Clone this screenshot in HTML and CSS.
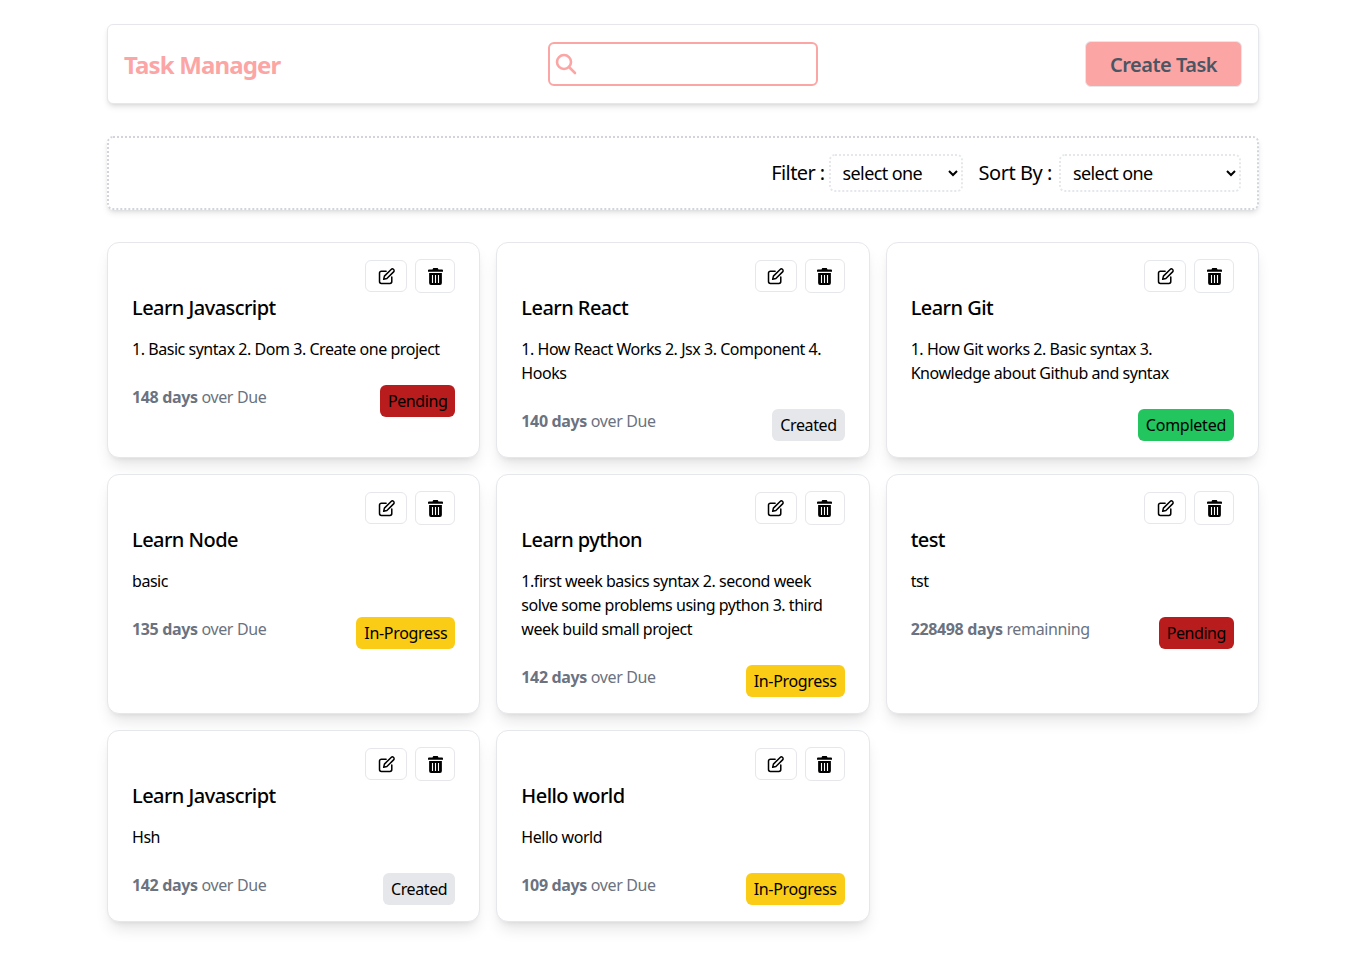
FILE: index.html
```html
<!DOCTYPE html>
<html lang="en">

<head>
    <meta charset="UTF-8">
    <title>Task Manager</title>

    <link rel="stylesheet" href="styles.css">
</head>

<body>
    <svg class="icon-defs" width="0" height="0" aria-hidden="true">
        <symbol id="icon-edit" viewBox="0 0 18 18">
            <path d="M8.6 3.4H3.6a2 2 0 0 0-2 2v9a2 2 0 0 0 2 2h9a2 2 0 0 0 2-2V9.6" fill="none" stroke="currentColor" stroke-width="1.6" stroke-linecap="round" stroke-linejoin="round" />
            <path d="M13.9 1.5a1.8 1.800 0 0 1 2.600 2.600L9.400 11.200l-3.400.8.8-3.400z" fill="none" stroke="currentColor" stroke-width="1.6" stroke-linejoin="round" />
        </symbol>
        <symbol id="icon-trash" viewBox="0 0 16 18">
            <path d="M5.6 0h4.8l.8 1.6H15a1 1 0 0 1 1 1V4H0V2.600a1 1 0 0 1 1-1h3.800z" fill="currentColor" />
            <path fill-rule="evenodd" d="M1.200 5.200h13.600V16a2 2 0 0 1-2 2H3.200a2 2 0 0 1-2-2zM4.200 7.400V15.800H5.400V7.400zM7.400 7.400V15.800H8.600V7.400zM10.600 7.400V15.800H11.800V7.400z" fill="currentColor" />
        </symbol>
    </svg>

    <div class="page">
        <header class="topbar">
            <h1 class="logo">Task Manager</h1>
            <div class="search">
                <svg class="search-icon" width="22" height="22" viewBox="0 0 22 22">
                    <circle cx="9" cy="9" r="7" fill="none" stroke="currentColor" stroke-width="2.6" />
                    <path d="M14 14l6 6" fill="none" stroke="currentColor" stroke-width="2.6" stroke-linecap="round" />
                </svg>
                <input class="search-input" type="text">
            </div>
            <button class="create-btn">Create Task</button>
        </header>

        <section class="filters">
            <label class="filter-label" for="filter">Filter :</label>
            <select class="filter-select filter-short" id="filter">
                <option>select one</option>
            </select>
            <label class="filter-label sort-label" for="sort">Sort By :</label>
            <select class="filter-select filter-long" id="sort">
                <option>select one</option>
            </select>
        </section>

        <main class="tasks">
            <article class="card">
                <div class="card-actions">
                    <button class="icon-btn edit-btn"><svg class="edit-icon"><use href="#icon-edit"></use></svg></button>
                    <button class="icon-btn trash-btn"><svg class="trash-icon"><use href="#icon-trash"></use></svg></button>
                </div>
                <h2 class="card-title">Learn Javascript</h2>
                <p class="card-desc">1. Basic syntax 2. Dom 3. Create one project</p>
                <div class="card-foot">
                    <p class="due"><b>148 days</b> over Due</p>
                    <span class="badge pending">Pending</span>
                </div>
            </article>

            <article class="card">
                <div class="card-actions">
                    <button class="icon-btn edit-btn"><svg class="edit-icon"><use href="#icon-edit"></use></svg></button>
                    <button class="icon-btn trash-btn"><svg class="trash-icon"><use href="#icon-trash"></use></svg></button>
                </div>
                <h2 class="card-title">Learn React</h2>
                <p class="card-desc">1. How React Works 2. Jsx 3. Component 4. Hooks</p>
                <div class="card-foot">
                    <p class="due"><b>140 days</b> over Due</p>
                    <span class="badge created">Created</span>
                </div>
            </article>

            <article class="card">
                <div class="card-actions">
                    <button class="icon-btn edit-btn"><svg class="edit-icon"><use href="#icon-edit"></use></svg></button>
                    <button class="icon-btn trash-btn"><svg class="trash-icon"><use href="#icon-trash"></use></svg></button>
                </div>
                <h2 class="card-title">Learn Git</h2>
                <p class="card-desc">1. How Git works 2. Basic syntax 3. Knowledge about Github and syntax</p>
                <div class="card-foot">
                    <p class="due"></p>
                    <span class="badge completed">Completed</span>
                </div>
            </article>

            <article class="card">
                <div class="card-actions">
                    <button class="icon-btn edit-btn"><svg class="edit-icon"><use href="#icon-edit"></use></svg></button>
                    <button class="icon-btn trash-btn"><svg class="trash-icon"><use href="#icon-trash"></use></svg></button>
                </div>
                <h2 class="card-title">Learn Node</h2>
                <p class="card-desc">basic</p>
                <div class="card-foot">
                    <p class="due"><b>135 days</b> over Due</p>
                    <span class="badge progress">In-Progress</span>
                </div>
            </article>

            <article class="card">
                <div class="card-actions">
                    <button class="icon-btn edit-btn"><svg class="edit-icon"><use href="#icon-edit"></use></svg></button>
                    <button class="icon-btn trash-btn"><svg class="trash-icon"><use href="#icon-trash"></use></svg></button>
                </div>
                <h2 class="card-title">Learn python</h2>
                <p class="card-desc">1.first week basics syntax 2. second week solve some problems using python 3. third week build small project</p>
                <div class="card-foot">
                    <p class="due"><b>142 days</b> over Due</p>
                    <span class="badge progress">In-Progress</span>
                </div>
            </article>

            <article class="card">
                <div class="card-actions">
                    <button class="icon-btn edit-btn"><svg class="edit-icon"><use href="#icon-edit"></use></svg></button>
                    <button class="icon-btn trash-btn"><svg class="trash-icon"><use href="#icon-trash"></use></svg></button>
                </div>
                <h2 class="card-title">test</h2>
                <p class="card-desc">tst</p>
                <div class="card-foot">
                    <p class="due"><b>228498 days</b> remainning</p>
                    <span class="badge pending">Pending</span>
                </div>
            </article>

            <article class="card">
                <div class="card-actions">
                    <button class="icon-btn edit-btn"><svg class="edit-icon"><use href="#icon-edit"></use></svg></button>
                    <button class="icon-btn trash-btn"><svg class="trash-icon"><use href="#icon-trash"></use></svg></button>
                </div>
                <h2 class="card-title">Learn Javascript</h2>
                <p class="card-desc">Hsh</p>
                <div class="card-foot">
                    <p class="due"><b>142 days</b> over Due</p>
                    <span class="badge created">Created</span>
                </div>
            </article>

            <article class="card">
                <div class="card-actions">
                    <button class="icon-btn edit-btn"><svg class="edit-icon"><use href="#icon-edit"></use></svg></button>
                    <button class="icon-btn trash-btn"><svg class="trash-icon"><use href="#icon-trash"></use></svg></button>
                </div>
                <h2 class="card-title">Hello world</h2>
                <p class="card-desc">Hello world</p>
                <div class="card-foot">
                    <p class="due"><b>109 days</b> over Due</p>
                    <span class="badge progress">In-Progress</span>
                </div>
            </article>
        </main>
    </div>
</body>

</html>
```

FILE: styles.css
```css
* {
    box-sizing: border-box;
}

body {
    margin: 0;
    background-color: #fff;
    color: #000;
    font-family: "Noto Sans", "Open Sans", sans-serif;
    font-size: 16px;
    line-height: 24px;
    letter-spacing: -0.46px;
}

.icon-defs {
    position: absolute;
}

.page {
    width: 1152px;
    margin-left: 107px;
    padding: 24px 0 40px;
}

/* top bar */
.topbar {
    display: flex;
    align-items: center;
    justify-content: space-between;
    height: 80px;
    padding: 0 16px;
    background-color: #fff;
    border: 1px solid #e5e7eb;
    border-radius: 6px;
    box-shadow: 0 4px 6px -1px rgba(0, 0, 0, 0.1), 0 2px 4px -2px rgba(0, 0, 0, 0.1);
}

.logo {
    margin: 2px 0 0;
    font-size: 24px;
    line-height: 32px;
    font-weight: 700;
    color: #fca5a5;
    letter-spacing: -0.85px;
}

.search {
    position: relative;
    width: 270px;
    height: 44px;
}

.search-icon {
    position: absolute;
    left: 7px;
    top: 11px;
    color: #fca5a5;
}

.search-input {
    width: 100%;
    height: 100%;
    background: #fff;
    border: 2px solid #fca5a5;
    border-radius: 6px;
    outline: none;
}

.create-btn {
    width: 157px;
    height: 46px;
    background-color: #fca5a5;
    border: 1px solid #e5e7eb;
    border-radius: 6px;
    color: #4b5563;
    font-family: inherit;
    font-size: 20px;
    font-weight: 600;
    letter-spacing: -0.5px;
}

/* filter row */
.filters {
    display: flex;
    align-items: center;
    justify-content: flex-end;
    height: 74px;
    margin-top: 32px;
    padding: 0 16px;
    border: 2px dotted #d1d5db;
    border-radius: 6px;
    box-shadow: 0 4px 6px -1px rgba(0, 0, 0, 0.1), 0 2px 4px -2px rgba(0, 0, 0, 0.1);
}

.filter-label {
    font-size: 20px;
    margin-right: 4px;
    letter-spacing: -0.6px;
}

.sort-label {
    margin-left: 16px;
    margin-right: 7px;
    letter-spacing: -0.45px;
}

.filter-select {
    height: 38px;
    padding: 0 8px;
    background-color: #fff;
    border: 2px dotted #e5e7eb;
    border-radius: 6px;
    color: #000;
    font-family: inherit;
    font-size: 18px;
    letter-spacing: -0.6px;
    outline: none;
}

.filter-short {
    width: 134px;
}

.filter-long {
    width: 182px;
}

/* task cards */
.tasks {
    display: grid;
    grid-template-columns: repeat(3, 1fr);
    gap: 16px;
    margin-top: 32px;
}

.card {
    display: flex;
    flex-direction: column;
    padding: 16px 24px;
    background-color: #fff;
    border: 1px solid #e5e7eb;
    border-radius: 12px;
    box-shadow: 0 10px 15px -3px rgba(0, 0, 0, 0.1), 0 4px 6px -4px rgba(0, 0, 0, 0.1);
}

.card-actions {
    display: flex;
    align-items: center;
    justify-content: flex-end;
    gap: 8px;
}

.icon-btn {
    display: flex;
    align-items: center;
    justify-content: center;
    padding: 0;
    background-color: #fff;
    border: 1px solid #e5e7eb;
    border-radius: 6px;
    color: #000;
}

.edit-btn {
    width: 42px;
    height: 32px;
}

.trash-btn {
    width: 40px;
    height: 34px;
}

.edit-icon {
    width: 17px;
    height: 17px;
}

.trash-icon {
    width: 15px;
    height: 17px;
}

.card-title {
    margin: 1px 0 0;
    font-size: 20px;
    line-height: 28px;
    font-weight: 500;
    letter-spacing: -0.55px;
}

.card-desc {
    margin: 15px 0 0;
}

.card-foot {
    display: flex;
    align-items: flex-start;
    justify-content: space-between;
    margin-top: 24px;
}

.due {
    margin: 0;
    color: #6b7280;
    letter-spacing: -0.36px;
}

.badge {
    height: 32px;
    padding: 4px 8px;
    border-radius: 6px;
}

.pending {
    background-color: #b91c1c;
    letter-spacing: -0.42px;
}

.created {
    background-color: #e5e7eb;
    letter-spacing: -0.38px;
}

.completed {
    background-color: #22c55e;
    letter-spacing: -0.25px;
}

.progress {
    background-color: #facc15;
    letter-spacing: -0.33px;
}
```
